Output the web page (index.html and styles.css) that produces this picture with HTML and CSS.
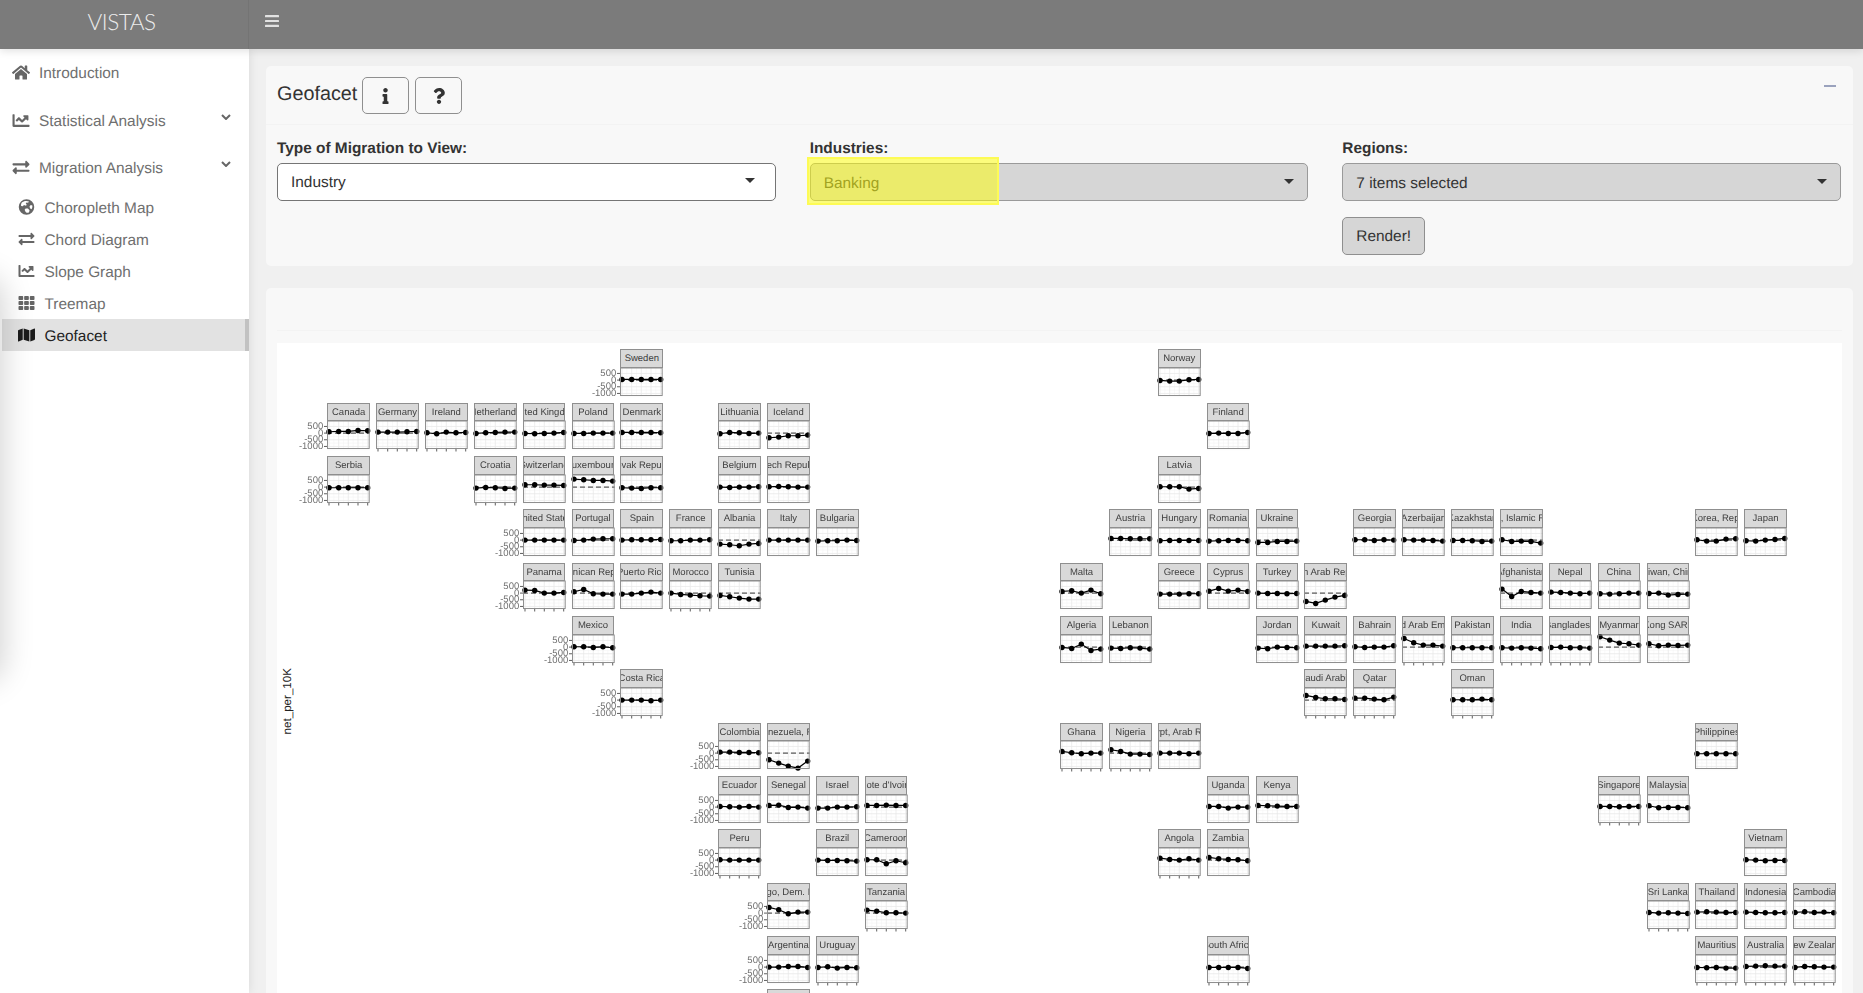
FILE: index.html
```html
<!DOCTYPE html>
<html lang="en">
<head>
<meta charset="utf-8">
<title>VISTAS - Geofacet</title>
<link rel="stylesheet" href="styles.css">
</head>
<body>
<header class="topbar">
  <div class="brand">VISTAS</div>
  <button class="toggle" aria-label="Toggle sidebar">
    <svg viewBox="0 0 14 12" width="14" height="12"><rect y="0" width="14" height="2.2" rx=".5"/><rect y="4.9" width="14" height="2.2" rx=".5"/><rect y="9.8" width="14" height="2.2" rx=".5"/></svg>
  </button>
</header>
<div class="layout">
  <aside class="sidebar">
    <div class="edge-shadow"></div>
    <nav>
      <a class="nav-item"><svg class="nav-icon" viewBox="0 0 576 512"><path d="M280.37 148.26L96 300.11V464a16 16 0 0 0 16 16l112.06-.29a16 16 0 0 0 15.92-16V368a16 16 0 0 1 16-16h64a16 16 0 0 1 16 16v95.64a16 16 0 0 0 16 16.05L464 480a16 16 0 0 0 16-16V300L295.67 148.26a12.19 12.19 0 0 0-15.3 0zM571.6 251.47L488 182.56V44.05a12 12 0 0 0-12-12h-56a12 12 0 0 0-12 12v72.61L318.47 43a48 48 0 0 0-61 0L4.34 251.47a12 12 0 0 0-1.6 16.9l25.5 31A12 12 0 0 0 45.15 301l235.22-193.74a12.19 12.19 0 0 1 15.3 0L530.9 301a12 12 0 0 0 16.9-1.6l25.5-31a12 12 0 0 0-1.7-16.93z"/></svg>Introduction</a>
      <a class="nav-item"><svg class="nav-icon" viewBox="0 0 512 512"><path d="M496 384H64V80c0-8.84-7.16-16-16-16H16C7.16 64 0 71.16 0 80v336c0 17.67 14.33 32 32 32h464c8.84 0 16-7.16 16-16v-32c0-8.84-7.16-16-16-16zM464 96H345.94c-21.38 0-32.09 25.85-16.97 40.97l32.4 32.4L288 242.75l-73.37-73.37c-12.5-12.5-32.76-12.5-45.25 0l-68.69 68.69c-6.25 6.25-6.25 16.38 0 22.63l22.62 22.62c6.25 6.25 16.38 6.25 22.63 0L192 237.25l73.37 73.37c12.5 12.5 32.76 12.5 45.25 0l96-96 32.4 32.4c15.12 15.12 40.97 4.41 40.97-16.97V112c.01-8.84-7.15-16-15.99-16z"/></svg>Statistical Analysis<svg class="chevron" viewBox="0 0 10 6"><path d="M1 1l4 4 4-4"/></svg></a>
      <a class="nav-item"><svg class="nav-icon" viewBox="0 0 512 512"><path d="M0 168v-16c0-13.255 10.745-24 24-24h360V80c0-21.367 25.899-32.042 40.971-16.971l80 80c9.372 9.373 9.372 24.569 0 33.941l-80 80C409.956 271.982 384 261.456 384 240v-48H24c-13.255 0-24-10.745-24-24zm488 152H128v-48c0-21.314-25.862-32.08-40.971-16.971l-80 80c-9.372 9.373-9.372 24.569 0 33.941l80 80C102.057 463.997 128 453.437 128 432v-48h360c13.255 0 24-10.745 24-24v-16c0-13.255-10.745-24-24-24z"/></svg>Migration Analysis<svg class="chevron" viewBox="0 0 10 6"><path d="M1 1l4 4 4-4"/></svg></a>
      <div class="subnav">
        <a class="sub-item"><svg class="sub-icon" viewBox="0 0 512 512"><path fill-rule="evenodd" d="M256 8a248 248 0 1 0 0 496 248 248 0 0 0 0-496zM100 120c40-34 90-56 150-56 30 0 60 6 86 18l-30 40-50-8-24 34 30 30-20 40-70-24-30 40-60-10c-6-40 2-72 18-104zm220 320c-50 10-84-6-100-40l-24-56 34-44 72 6 50 50-6 44zm92-110l-46-36-12-60 40-40 48 10c8 44 0 88-30 126z"/></svg>Choropleth Map</a>
        <a class="sub-item"><svg class="sub-icon" viewBox="0 0 512 512"><path d="M0 168v-16c0-13.255 10.745-24 24-24h360V80c0-21.367 25.899-32.042 40.971-16.971l80 80c9.372 9.373 9.372 24.569 0 33.941l-80 80C409.956 271.982 384 261.456 384 240v-48H24c-13.255 0-24-10.745-24-24zm488 152H128v-48c0-21.314-25.862-32.08-40.971-16.971l-80 80c-9.372 9.373-9.372 24.569 0 33.941l80 80C102.057 463.997 128 453.437 128 432v-48h360c13.255 0 24-10.745 24-24v-16c0-13.255-10.745-24-24-24z"/></svg>Chord Diagram</a>
        <a class="sub-item"><svg class="sub-icon" viewBox="0 0 512 512"><path d="M496 384H64V80c0-8.84-7.16-16-16-16H16C7.16 64 0 71.16 0 80v336c0 17.67 14.33 32 32 32h464c8.84 0 16-7.16 16-16v-32c0-8.84-7.16-16-16-16zM464 96H345.94c-21.38 0-32.09 25.85-16.97 40.97l32.4 32.4L288 242.75l-73.37-73.37c-12.5-12.5-32.76-12.5-45.25 0l-68.69 68.69c-6.25 6.25-6.25 16.38 0 22.63l22.62 22.62c6.25 6.25 16.38 6.25 22.63 0L192 237.25l73.37 73.37c12.5 12.5 32.76 12.5 45.25 0l96-96 32.4 32.4c15.12 15.12 40.97 4.41 40.97-16.97V112c.01-8.84-7.15-16-15.99-16z"/></svg>Slope Graph</a>
        <a class="sub-item"><svg class="sub-icon" viewBox="0 0 512 512"><path d="M149.333 56v80c0 13.255-10.745 24-24 24H24c-13.255 0-24-10.745-24-24V56c0-13.255 10.745-24 24-24h101.333c13.255 0 24 10.745 24 24zm181.334 240v-80c0-13.255-10.745-24-24-24H205.333c-13.255 0-24 10.745-24 24v80c0 13.255 10.745 24 24 24h101.333c13.256 0 24.001-10.745 24.001-24zm32-240v80c0 13.255 10.745 24 24 24H488c13.255 0 24-10.745 24-24V56c0-13.255-10.745-24-24-24H387.667c-13.255 0-24 10.745-24 24zm-32 80V56c0-13.255-10.745-24-24-24H205.333c-13.255 0-24 10.745-24 24v80c0 13.255 10.745 24 24 24h101.333c13.256 0 24.001-10.745 24.001-24zm-205.334 56H24c-13.255 0-24 10.745-24 24v80c0 13.255 10.745 24 24 24h101.333c13.255 0 24-10.745 24-24v-80c0-13.255-10.745-24-24-24zM0 376v80c0 13.255 10.745 24 24 24h101.333c13.255 0 24-10.745 24-24v-80c0-13.255-10.745-24-24-24H24c-13.255 0-24 10.745-24 24zm386.667-56H488c13.255 0 24-10.745 24-24v-80c0-13.255-10.745-24-24-24H386.667c-13.255 0-24 10.745-24 24v80c0 13.255 10.745 24 24 24zm0 160H488c13.255 0 24-10.745 24-24v-80c0-13.255-10.745-24-24-24H386.667c-13.255 0-24 10.745-24 24v80c0 13.255 10.745 24 24 24zM181.333 376v80c0 13.255 10.745 24 24 24h101.333c13.255 0 24-10.745 24-24v-80c0-13.255-10.745-24-24-24H205.333c-13.255 0-24 10.745-24 24z"/></svg>Treemap</a>
        <a class="sub-item active"><svg class="sub-icon" viewBox="0 0 576 512"><path d="M0 117.66v346.32c0 11.32 11.43 19.06 21.94 14.86L160 416V32L20.12 87.95A32.006 32.006 0 0 0 0 117.66zM192 416l192 64V96L192 32v384zM554.06 33.16L416 96v384l139.88-55.95A31.996 31.996 0 0 0 576 394.34V48.02c0-11.32-11.43-19.06-21.94-14.86z"/></svg>Geofacet</a>
      </div>
    </nav>
  </aside>
  <main class="content">
    <section class="card card-controls">
      <div class="card-head">
        <h2 class="card-title">Geofacet</h2>
        <button class="icon-btn" aria-label="Info"><svg viewBox="0 0 192 512" width="7" height="16"><path d="M20 424.229h20V279.771H20c-11.046 0-20-8.954-20-20V212c0-11.046 8.954-20 20-20h112c11.046 0 20 8.954 20 20v212.229h20c11.046 0 20 8.954 20 20V492c0 11.046-8.954 20-20 20H20c-11.046 0-20-8.954-20-20v-47.771c0-11.046 8.954-20 20-20zM96 0C56.235 0 24 32.235 24 72s32.235 72 72 72 72-32.235 72-72S135.764 0 96 0z"/></svg></button>
        <button class="icon-btn" aria-label="Help"><svg viewBox="0 0 384 512" width="12" height="16"><path d="M202.021 0C122.202 0 70.503 32.703 29.914 91.026c-7.363 10.58-5.093 25.086 5.178 32.874l43.138 32.709c10.373 7.865 25.132 6.026 33.253-4.148 25.049-31.381 43.63-49.449 82.757-49.449 30.764 0 68.816 19.799 68.816 49.631 0 22.552-18.617 34.134-48.993 51.164-35.423 19.86-82.299 44.576-82.299 106.405V320c0 13.255 10.745 24 24 24h72.471c13.255 0 24-10.745 24-24v-5.773c0-42.86 125.268-44.645 125.268-160.627C377.504 66.256 286.902 0 202.021 0zM192 373.459c-38.196 0-69.271 31.075-69.271 69.271 0 38.195 31.075 69.27 69.271 69.27s69.271-31.075 69.271-69.271-31.075-69.27-69.271-69.27z"/></svg></button>
        <span class="collapse-btn"></span>
      </div>
      <div class="form-grid">
        <div class="field">
          <label class="field-label">Type of Migration to View:</label>
          <div class="select primary"><span>Industry</span><i class="caret"></i></div>
        </div>
        <div class="field">
          <label class="field-label">Industries:</label>
          <div class="select disabled"><span class="dim">Banking</span><i class="caret"></i></div>
          <div class="highlight"></div>
        </div>
        <div class="field">
          <label class="field-label">Regions:</label>
          <div class="select disabled"><span>7 items selected</span><i class="caret"></i></div>
          <button class="render-btn">Render!</button>
        </div>
      </div>
    </section>
    <section class="card card-plot">
      <div class="plot-head"></div>
      <div class="plot">
        <div class="y-title">net_per_10K</div>
        <div class="geofacet" id="geofacet"></div>
      </div>
    </section>
  </main>
</div>
<script src="geofacet.js"></script>
</body>
</html>
```
FILE: styles.css
```css
* { box-sizing: border-box; }
html, body { margin: 0; height: 100%; }
body {
  display: flex;
  flex-direction: column;
  height: 100vh;
  overflow: hidden;
  font-family: "Liberation Sans", Arial, sans-serif;
  text-rendering: geometricPrecision;
  color: #333;
  background: #f0f0f0;
}
.topbar {
  flex: none;
  display: flex;
  height: 49px;
  background: #7b7b7b;
  box-shadow: 0 2px 8px rgba(0, 0, 0, .12);
  position: relative;
  z-index: 3;
}
.brand {
  width: 249px;
  display: flex;
  align-items: center;
  justify-content: center;
  padding: 0 5px 7px 0;
  border-right: 1px solid #747474;
  font-family: "Lato", "Liberation Sans", sans-serif;
  font-weight: 300;
  font-size: 22.5px;
  letter-spacing: -.5px;
  color: #ececec;
}
.toggle {
  display: flex;
  align-items: flex-start;
  padding: 15px 0 0 16px;
  border: 0;
  background: none;
}
.toggle svg { fill: #e2e2e2; }
.layout { flex: 1; display: flex; min-height: 0; }
.sidebar {
  flex: none;
  position: relative;
  width: 249px;
  background: #fff;
  box-shadow: 0 0 10px rgba(0, 0, 0, .1);
  overflow: hidden;
  z-index: 2;
}
.edge-shadow {
  position: absolute;
  left: -40px;
  top: 230px;
  width: 40px;
  height: 400px;
  border-radius: 20px;
  box-shadow: 0 0 30px 4px rgba(0, 0, 0, .17);
  z-index: 2;
}
.nav-item, .sub-item {
  display: flex;
  align-items: center;
  color: #6f6f6f;
  font-size: 15.4px;
}
.nav-item { height: 47.4px; padding: 3px 0 0 12px; }
.nav-icon { width: 18px; height: 17px; margin: -3px 9px 0 0; fill: #666; }
.chevron {
  width: 10px;
  height: 6px;
  margin: -10px 18px 0 auto;
  fill: none;
  stroke: #666;
  stroke-width: 2;
}
.sub-item { height: 32px; margin-left: 2px; padding: 3px 0 0 15.5px; }
.sub-icon { width: 17px; height: 16px; margin: -3px 10px 0 0; fill: #666; flex: none; }
.sub-item.active {
  background: #e2e2e2;
  border-right: 4px solid #c2c2c2;
  color: #222;
}
.sub-item.active .sub-icon { fill: #1c1c1c; }
.content {
  flex: 1;
  min-width: 0;
  padding: 17px 10px 0 17px;
}
.card { background: #f8f8f8; border-radius: 5px; }
.card-controls { height: 200px; margin-bottom: 22px; }
.card-head {
  display: flex;
  align-items: flex-start;
  height: 59px;
  padding: 11px 11px 0;
  border-bottom: 1px solid #f3f3f3;
}
.card-title {
  width: 85px;
  margin: 0;
  font-size: 19.8px;
  font-weight: 400;
  line-height: 35px;
  color: #333;
}
.icon-btn {
  display: flex;
  align-items: center;
  justify-content: center;
  width: 47px;
  height: 37px;
  margin-right: 6px;
  padding: 0;
  border: 1px solid #8f8f8f;
  border-radius: 5px;
  background: #f8f8f8;
}
.icon-btn svg { fill: #333; }
.collapse-btn {
  width: 12px;
  height: 2px;
  margin: 8px 6px 0 auto;
  background: #9aa2bd;
}
.form-grid {
  display: grid;
  grid-template-columns: repeat(3, 1fr);
  column-gap: 34px;
  padding: 15px 12px 0 11px;
}
.field { position: relative; min-width: 0; }
.field-label {
  display: block;
  margin-bottom: 5px;
  font-size: 15.4px;
  font-weight: 700;
  line-height: 18px;
  color: #333;
}
.select {
  display: flex;
  align-items: center;
  justify-content: space-between;
  height: 37.5px;
  padding: 3px 13px 0 13px;
  border: 1px solid #757575;
  border-radius: 5px;
  background: #fff;
  font-size: 15.4px;
  color: #333;
}
.select.primary { padding-right: 20px; }
.select.disabled {
  border-color: #9a9a9a;
  background: #d6d6d6;
  padding-top: 5px;
}
.dim { color: #444; }
.caret {
  width: 0;
  height: 0;
  margin-top: -5px;
  border-style: solid;
  border-width: 5px 5px 0;
  border-color: #333 transparent transparent;
}
.highlight {
  position: absolute;
  left: -3px;
  top: 16.5px;
  width: 192px;
  height: 48px;
  border: 2px solid #fdfb55;
  background: rgba(255, 255, 0, .5);
}
.render-btn {
  display: block;
  height: 37.7px;
  margin-top: 16.5px;
  padding: 3px 13px 0;
  border: 1px solid #8f8f8f;
  border-radius: 5px;
  background: #d6d6d6;
  font-family: inherit;
  font-size: 15.4px;
  text-rendering: geometricPrecision;
  color: #333;
}
.plot-head { height: 43px; border-bottom: 1px solid #f3f3f3; margin-bottom: 12px; }
.card-plot { padding: 0 11px; height: 800px; }
.plot {
  position: relative;
  height: 740px;
  padding: 6.4px 0 0 50.3px;
  background: #fff;
  overflow: hidden;
}
.y-title {
  position: absolute;
  left: 4px;
  top: 325px;
  font-size: 11.6px;
  line-height: 13px;
  color: #222;
  writing-mode: vertical-rl;
  transform: rotate(180deg);
}
.geofacet {
  display: grid;
  grid-template-columns: repeat(31, 48.86px);
  grid-auto-rows: 53.33px;
  filter: blur(.35px);
}
.facet { position: relative; width: 42.7px; height: 46.7px; }
.strip {
  display: flex;
  align-items: center;
  justify-content: center;
  height: 18.7px;
  padding-top: 1px;
  border: 1px solid #8f8f8f;
  background: #d9d9d9;
  color: #404040;
  font-size: 9.5px;
  line-height: 1;
  white-space: nowrap;
  overflow: hidden;
}
.panel {
  display: block;
  width: 42.7px;
  height: 28px;
  overflow: visible;
}
.panel-frame { fill: none; stroke: #8f8f8f; stroke-width: 1; }
.grid-major { stroke: #e9e9e9; stroke-width: .8; }
.grid-minor { stroke: #f2f2f2; stroke-width: .5; }
.zero-line { stroke: #333; stroke-width: 1; stroke-dasharray: 5 3; }
.series { fill: none; stroke: #000; stroke-width: 1.2; }
.dot { fill: #000; }
.tick { stroke: #333; stroke-width: .8; }
.axis-label { font-size: 9.5px; fill: #707070; text-anchor: end; dominant-baseline: central; }
```
FILE: geofacet.js
```js
// name, column, row, five values (px/3 above the zero line), flags: t = x ticks, y = y axis
var FACETS = [
  ["Sweden",6,0,[2,2,2,2,2],"y"],
  ["Norway",17,0,[-1,-3,-3,1,2],""],
  ["Canada",0,1,[4,5,5,8,7],"y"],
  ["Germany",1,1,[3,3,3,4,5],"t"],
  ["Ireland",2,1,[1,-2,3,1,2],"t"],
  ["Netherlands",3,1,[-1,1,2,3,3],""],
  ["United Kingdom",4,1,[-1,-2,-1,0,2],""],
  ["Poland",5,1,[-1,-1,0,0,0],""],
  ["Denmark",6,1,[2,2,2,2,1],""],
  ["Lithuania",8,1,[-2,2,1,-1,0],""],
  ["Iceland",9,1,[-14,-12,-8,-8,-6],""],
  ["Finland",18,1,[-1,0,-1,-1,2],""],
  ["Serbia",0,2,[-2,-2,-2,-2,-2],"yt"],
  ["Croatia",3,2,[-3,-1,-2,-4,-3],"t"],
  ["Switzerland",4,2,[7,7,6,6,5],""],
  ["Luxembourg",5,2,[24,22,20,20,18],""],
  ["Slovak Republic",6,2,[-2,-3,-4,-2,-2],""],
  ["Belgium",8,2,[0,-1,0,0,1],""],
  ["Czech Republic",9,2,[1,2,1,0,0],""],
  ["Latvia",17,2,[1,1,1,-6,-4],""],
  ["United States",4,3,[0,0,0,0,0],"y"],
  ["Portugal",5,3,[-1,0,3,4,4],""],
  ["Spain",6,3,[0,1,1,1,2],""],
  ["France",7,3,[-2,-2,0,0,1],""],
  ["Albania",8,3,[-12,-14,-17,-12,-10],""],
  ["Italy",9,3,[0,0,0,0,0],""],
  ["Bulgaria",10,3,[-3,-2,-2,0,-1],""],
  ["Austria",16,3,[5,5,4,4,4],""],
  ["Hungary",17,3,[-2,-1,-1,-1,-1],""],
  ["Romania",18,3,[-3,-2,-1,-1,-2],""],
  ["Ukraine",19,3,[-7,-7,-4,-4,-3],""],
  ["Georgia",21,3,[1,1,-1,1,0],""],
  ["Azerbaijan",22,3,[1,0,0,-1,-3],""],
  ["Kazakhstan",23,3,[-1,-1,-2,-4,-3],""],
  ["Iran, Islamic Rep.",24,3,[1,-4,-3,-4,-9],""],
  ["Korea, Rep.",28,3,[1,-3,-3,3,4],""],
  ["Japan",29,3,[-2,-3,0,2,5],""],
  ["Panama",4,4,[9,8,0,0,2],"yt"],
  ["Dominican Republic",5,4,[4,11,-2,-3,-3],""],
  ["Puerto Rico",6,4,[-3,-3,0,3,0],""],
  ["Morocco",7,4,[0,-4,-6,-8,-9],"t"],
  ["Tunisia",8,4,[-7,-11,-15,-18,-18],""],
  ["Malta",15,4,[5,7,0,9,-2],""],
  ["Greece",17,4,[-3,-3,-3,-2,-2],""],
  ["Cyprus",18,4,[6,14,6,9,5],""],
  ["Turkey",19,4,[0,-1,-1,-2,-1],""],
  ["Syrian Arab Republic",20,4,[-25,-31,-21,-12,-7],""],
  ["Afghanistan",24,4,[12,-10,5,2,0],""],
  ["Nepal",25,4,[3,2,0,-2,0],""],
  ["China",26,4,[-2,-3,-2,0,0],""],
  ["Taiwan, China",27,4,[-1,0,-6,-4,-3],""],
  ["Mexico",5,5,[1,1,-1,1,-2],"yt"],
  ["Algeria",15,5,[-1,-4,9,-10,-6],""],
  ["Lebanon",16,5,[-3,-4,-2,-3,-6],""],
  ["Jordan",19,5,[-3,-5,0,-1,-2],""],
  ["Kuwait",20,5,[3,3,3,3,4],""],
  ["Bahrain",21,5,[1,-1,0,0,4],""],
  ["United Arab Emirates",22,5,[26,13,6,6,3],"t"],
  ["Pakistan",23,5,[-2,-2,-2,-2,-2],""],
  ["India",24,5,[-2,-3,-2,-3,-5],"t"],
  ["Bangladesh",25,5,[-1,0,-2,-2,-3],"t"],
  ["Myanmar",26,5,[31,21,12,10,6],""],
  ["Hong Kong SAR, China",27,5,[10,4,6,5,6],""],
  ["Costa Rica",6,6,[0,0,0,-2,0],"yt"],
  ["Saudi Arabia",20,6,[14,8,4,4,2],"t"],
  ["Qatar",21,6,[6,6,3,1,9],"t"],
  ["Oman",23,6,[1,1,1,3,1],"t"],
  ["Colombia",8,7,[3,3,2,2,1],"y"],
  ["Venezuela, RB",9,7,[-20,-30,-39,-45,-24],""],
  ["Ghana",15,7,[5,1,-2,0,0],"t"],
  ["Nigeria",16,7,[10,5,-3,-3,-4],"t"],
  ["Egypt, Arab Rep.",17,7,[0,0,0,-2,0],""],
  ["Philippines",28,7,[-2,-2,-2,-2,-2],""],
  ["Ecuador",8,8,[2,1,0,2,0],"y"],
  ["Senegal",9,8,[5,6,-1,0,-3],""],
  ["Israel",10,8,[-3,-3,0,0,1],""],
  ["Cote d'Ivoire",11,8,[5,5,6,5,5],""],
  ["Uganda",18,8,[2,2,-3,0,0],""],
  ["Kenya",19,8,[5,4,3,2,2],""],
  ["Singapore",26,8,[2,2,1,2,2],"t"],
  ["Malaysia",27,8,[4,-2,-1,-1,-2],""],
  ["Peru",8,9,[1,0,0,0,0],"yt"],
  ["Brazil",10,9,[0,-1,-1,-2,-3],""],
  ["Cameroon",11,9,[1,1,-11,-2,-8],""],
  ["Angola",17,9,[6,2,0,4,0],"t"],
  ["Zambia",18,9,[8,4,2,1,-2],""],
  ["Vietnam",29,9,[1,0,-2,-1,-1],""],
  ["Congo, Dem. Rep.",9,10,[17,10,-2,3,3],"y"],
  ["Tanzania",11,10,[9,6,1,1,0],"t"],
  ["Sri Lanka",27,10,[2,0,1,0,-1],"t"],
  ["Thailand",28,10,[3,4,3,2,2],""],
  ["Indonesia",29,10,[3,2,1,1,2],""],
  ["Cambodia",30,10,[2,4,2,3,1],""],
  ["Argentina",9,11,[0,0,2,2,-1],"y"],
  ["Uruguay",10,11,[-1,1,-3,-1,-2],"t"],
  ["South Africa",18,11,[-1,-1,-1,-1,-4],"t"],
  ["Mauritius",28,11,[-1,-2,-1,-3,-3],"t"],
  ["Australia",29,11,[2,3,4,3,3],"t"],
  ["New Zealand",30,11,[-1,2,1,0,0],"t"],
  ["Chile",9,12,[0,0,0,0,0],""]
];

var W = 42.7, H = 28, ZERO = 12.1, UNIT = 6.67 / 500;
var XS = [2, 11.7, 21.3, 31, 40.7];
var YMAJ = [500, 0, -500, -1000];

function yOf(v) { return ZERO - v * UNIT; }
function line(cls, x1, y1, x2, y2) {
  return '<line class="' + cls + '" x1="' + x1 + '" y1="' + y1 + '" x2="' + x2 + '" y2="' + y2 + '"/>';
}

function panelMarkup(values, flags) {
  var s = "";
  var i;
  for (i = 0; i < 4; i++) {
    var mx = (XS[i] + XS[i + 1]) / 2;
    s += line("grid-minor", mx, 0, mx, H);
    var my = (yOf(YMAJ[i]) + (i < 3 ? yOf(YMAJ[i + 1]) : yOf(YMAJ[i]) + 6.67)) / 2;
    s += line("grid-minor", 0, my, W, my);
  }
  XS.forEach(function (x) { s += line("grid-major", x, 0, x, H); });
  YMAJ.forEach(function (v) { s += line("grid-major", 0, yOf(v), W, yOf(v)); });
  s += line("zero-line", 0, ZERO, W, ZERO);
  var pts = values.map(function (v, k) { return XS[k] + "," + (ZERO - v / 3).toFixed(2); });
  s += '<polyline class="series" points="' + pts.join(" ") + '"/>';
  pts.forEach(function (p) {
    var c = p.split(",");
    s += '<circle class="dot" cx="' + c[0] + '" cy="' + c[1] + '" r="2.7"/>';
  });
  s += '<rect class="panel-frame" x=".5" y="0" width="' + (W - 1) + '" height="' + (H - .5) + '"/>';
  if (flags.indexOf("t") >= 0) {
    XS.forEach(function (x) { s += line("tick", x, H, x, H + 2.5); });
  }
  if (flags.indexOf("y") >= 0) {
    YMAJ.forEach(function (v) {
      s += line("tick", -3, yOf(v), 0, yOf(v));
      s += '<text class="axis-label" x="-3.8" y="' + yOf(v) + '">' + v + "</text>";
    });
  }
  return s;
}

var root = document.getElementById("geofacet");
root.innerHTML = FACETS.map(function (f) {
  return '<div class="facet" style="grid-column:' + (f[1] + 1) + ";grid-row:" + (f[2] + 1) + '">' +
    '<div class="strip">' + f[0] + "</div>" +
    '<svg class="panel" viewBox="0 0 ' + W + " " + H + '">' + panelMarkup(f[3], f[4]) + "</svg></div>";
}).join("");
```
